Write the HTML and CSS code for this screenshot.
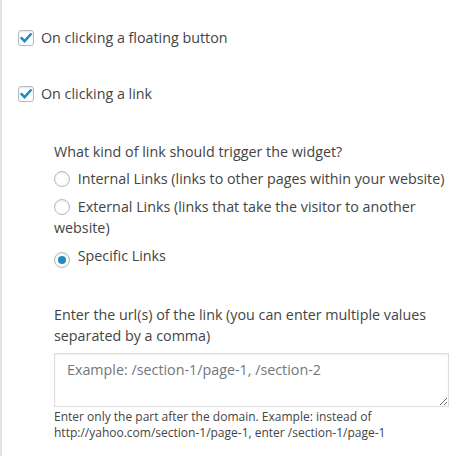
FILE: index.html
```html
<!DOCTYPE html>
<html>
<head>
<meta charset="utf-8">
<link rel="stylesheet" href="styles.css">
</head>
<body>
<div class="panel">
  <label class="check-row first">
    <span class="box"><svg viewBox="0 0 16 16" width="16" height="16"><path d="M3.6 8.2 L6.6 11.2 L12.6 4.4" fill="none" stroke="#1e8cbe" stroke-width="2.5" stroke-linecap="square"/></svg></span>
    <span>On clicking a floating button</span>
  </label>
  <label class="check-row second">
    <span class="box"><svg viewBox="0 0 16 16" width="16" height="16"><path d="M3.6 8.2 L6.6 11.2 L12.6 4.4" fill="none" stroke="#1e8cbe" stroke-width="2.5" stroke-linecap="square"/></svg></span>
    <span>On clicking a link</span>
  </label>
  <div class="sub">
    <p class="question">What kind of link should trigger the widget?</p>
    <label class="radio-row"><span class="radio"></span> Internal Links (links to other pages within your website)</label>
    <label class="radio-row"><span class="radio"></span> External Links (links that take the visitor to another website)</label>
    <label class="radio-row"><span class="radio on"></span> Specific Links</label>
    <p class="url-label">Enter the url(s) of the link (you can enter multiple values separated by a comma)</p>
    <textarea class="urls" placeholder="Example: /section-1/page-1, /section-2"></textarea>
    <p class="help">Enter only the part after the domain. Example: instead of http://yahoo.com/section-1/page-1, enter /section-1/page-1</p>
  </div>
</div>
</body>
</html>
```
FILE: styles.css
```css
html, body {
  margin: 0;
  padding: 0;
  background: #fff;
}
body {
  font-family: "Open Sans", "Liberation Sans", sans-serif;
  font-size: 14.3px;
  line-height: 1.5;
  color: #444;
}
.panel {
  border-left: 2px solid #e2e2e2;
  min-height: 456px;
  box-sizing: border-box;
  padding: 27px 0 0 16px;
}
.check-row {
  display: flex;
  align-items: center;
}
.check-row.second {
  margin-top: 35px;
}
.box {
  flex: none;
  width: 16px;
  height: 16px;
  box-sizing: border-box;
  border: 1px solid #b4b9be;
  border-radius: 3px;
  box-shadow: inset 0 1px 2px rgba(0,0,0,0.1);
  margin-right: 7px;
  position: relative;
}
.box svg {
  position: absolute;
  left: -1px;
  top: -1px;
}
.sub {
  padding-left: 36px;
  padding-right: 16px;
}
.question {
  margin: 36px 0 0;
}
.radio-row {
  display: block;
  margin-top: 6px;
}
.radio {
  display: inline-flex;
  align-items: center;
  justify-content: center;
  vertical-align: -3px;
  width: 16px;
  height: 16px;
  box-sizing: border-box;
  border: 1px solid #b4b9be;
  border-radius: 50%;
  box-shadow: inset 0 1px 2px rgba(0,0,0,0.1);
  margin-right: 4px;
}
.radio.on::after {
  content: "";
  width: 8px;
  height: 8px;
  border-radius: 50%;
  background: #1e8cbe;
}
.url-label {
  margin: 36px 0 0;
}
.urls {
  display: block;
  margin-top: 6px;
  width: 395px;
  height: 54px;
  box-sizing: border-box;
  border: 1px solid #ddd;
  box-shadow: inset 0 1px 2px rgba(0,0,0,0.07);
  padding: 5px 12px;
  font-family: "Open Sans", "Liberation Sans", sans-serif;
  font-size: 14.3px;
  line-height: 1.5;
  color: #32373c;
  resize: vertical;
  outline: none;
}
.urls::placeholder {
  color: #72777c;
}
.help {
  margin: 2px 0 0;
  font-size: 12px;
  line-height: 1.4;
}
```
